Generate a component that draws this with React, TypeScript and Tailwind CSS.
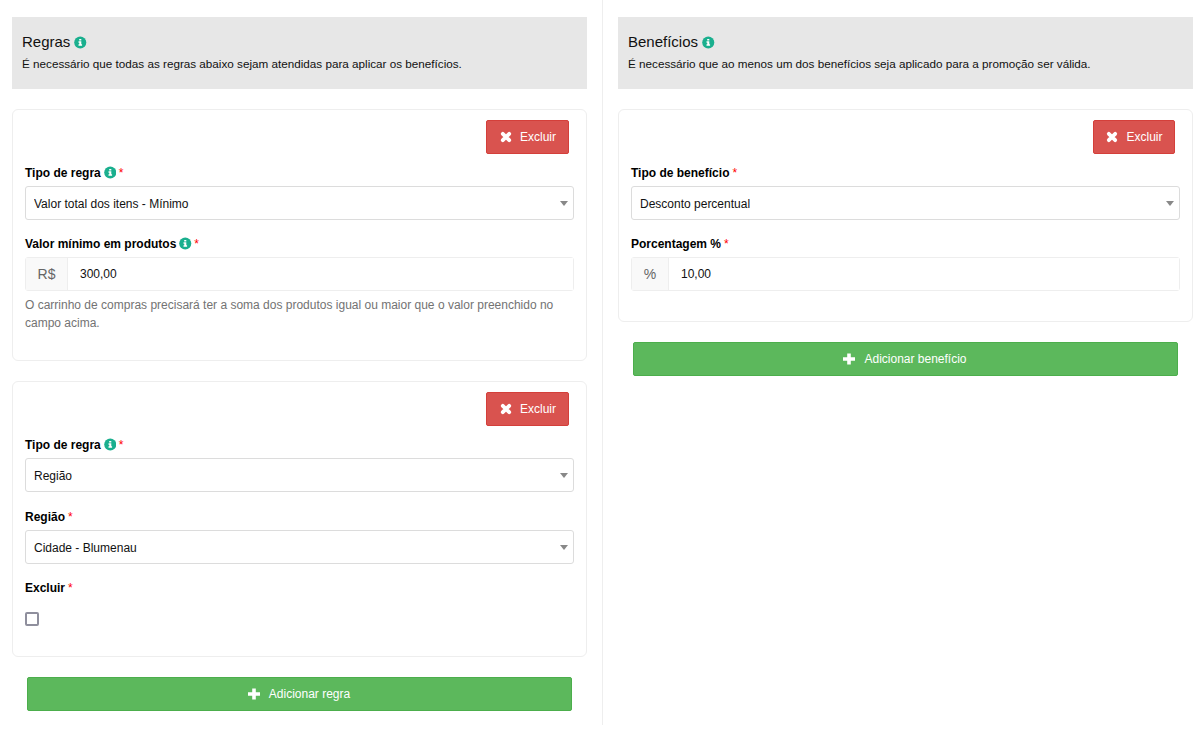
import type { ReactNode } from 'react';

const INPUT_TEXT = 'text-[12px] text-[#111]';

function Info() {
  return (
    <svg width="12.5" height="13" viewBox="0 0 13 13" className="shrink-0">
      <circle cx="6.5" cy="6.5" r="6.3" fill="#1aaf8e" />
      <path d="M5.4 2.8h2.2v1.6H5.4zM4.7 5.2h2.9v3.2h.8v1.6H4.7V8.4h.8V6.8h-.8z" fill="#fff" />
    </svg>
  );
}

function TimesIcon() {
  return (
    <svg width="12" height="12" viewBox="0 0 12 12" className="ml-[1px] mr-[8px] shrink-0">
      <path d="M2.8 2.8 9.2 9.2M9.2 2.8 2.8 9.2" stroke="#fff" strokeWidth="3.8" strokeLinecap="round" />
    </svg>
  );
}

function PlusIcon() {
  return (
    <svg width="12" height="12" viewBox="0 0 12 12" className="-ml-[1px] mr-[9px] shrink-0">
      <path d="M4.2 0.5h3.6v3.7H12v3.6H7.8v3.7H4.2V7.8H0V4.2h4.2z" fill="#fff" />
    </svg>
  );
}

function Label({
  text,
  info,
  mt = 'mt-[14px]',
}: {
  text: string;
  info?: boolean;
  mt?: string;
}) {
  return (
    <label className={`flex items-center h-[18px] pt-[2px] mb-[5px] text-[12px] font-bold text-black ${mt}`}>
      {text}
      {info && (
        <span className="ml-[3px] flex -mt-[2px]">
          <Info />
        </span>
      )}
      <span className={`text-[#ff0000] font-normal ${info ? 'ml-[2.5px]' : 'ml-[3px]'}`}>*</span>
    </label>
  );
}

function SelectBox({ value }: { value: string }) {
  return (
    <div className="relative">
      <select
        defaultValue={value}
        className={`block w-full h-[34px] appearance-none bg-white border border-[#dcdcdc] rounded-[3px] pl-2 pr-6 pt-[2px] ${INPUT_TEXT}`}
      >
        <option value={value}>{value}</option>
      </select>
      <span className="absolute right-[6px] top-[15px] w-0 h-0 border-l-[4px] border-r-[4px] border-t-[5px] border-l-transparent border-r-transparent border-t-[#888]" />
    </div>
  );
}

function AddonInput({ addon, value, addonWidth }: { addon: string; value: string; addonWidth: string }) {
  return (
    <div className="flex h-[34px] border border-[#eeeeee] rounded-[3px]">
      <span
        className={`flex items-center justify-center bg-[#f9f9f9] border-r border-[#eeeeee] text-[14px] text-[#666] ${addonWidth}`}
      >
        {addon}
      </span>
      <input
        defaultValue={value}
        className={`flex-1 min-w-0 pl-[12px] bg-white outline-none ${INPUT_TEXT}`}
      />
    </div>
  );
}

function Card({
  children,
  pb = 'pb-[30px]',
  buttonWidth = 'w-[83px]',
}: {
  children: ReactNode;
  pb?: string;
  buttonWidth?: string;
}) {
  return (
    <div className={`border border-[#eeeeee] rounded-[6px] bg-white pl-3 pr-3 pt-[10px] ${pb}`}>
      <div className="flex justify-end pr-[5px] mb-[9px]">
        <button
          className={`flex items-center justify-center h-[34px] bg-[#d9534f] border border-[#d43f3a] rounded-[2px] text-[12px] text-white ${buttonWidth}`}
        >
          <TimesIcon />
          Excluir
        </button>
      </div>
      {children}
    </div>
  );
}

function SectionHeader({ title, text }: { title: string; text: string }) {
  return (
    <div className="h-[72px] bg-[#e7e7e7] pt-[16px] px-[10px]">
      <h2 className="flex items-center h-[18px] text-[15px] font-normal text-[#111]">
        {title}
        <span className="ml-[4px] flex mt-[1px]">
          <Info />
        </span>
      </h2>
      <p className="mt-[4px] text-[11.7px] leading-[18px] text-[#111]">{text}</p>
    </div>
  );
}

function AddButton({ label }: { label: string }) {
  return (
    <button className="flex items-center justify-center w-full h-[34px] bg-[#5cb85c] border border-[#4cae4c] rounded-[2px] text-[12px] text-white">
      <PlusIcon />
      {label}
    </button>
  );
}

export default function App() {
  return (
    <div className="flex items-start w-[1202px] bg-white font-['Liberation_Sans',Arial,sans-serif]">
      {/* Regras */}
      <div className="w-[603px] h-[725px] shrink-0 border-r border-[#eeeeee] pl-3 pr-[15px] pt-[17px]">
        <SectionHeader
          title="Regras"
          text="É necessário que todas as regras abaixo sejam atendidas para aplicar os benefícios."
        />
        <div className="mt-5">
          <Card pb="pb-[28px]">
            <Label text="Tipo de regra" info mt="" />
            <SelectBox value="Valor total dos itens - Mínimo" />
            <Label text="Valor mínimo em produtos" info />
            <AddonInput addon="R$" value="300,00" addonWidth="w-[42px]" />
            <p className="mt-[5px] text-[12px] leading-[18px] text-[#737373]">
              O carrinho de compras precisará ter a soma dos produtos igual ou maior que o valor preenchido no campo acima.
            </p>
          </Card>
        </div>
        <div className="mt-5">
          <Card>
            <Label text="Tipo de regra" info mt="" />
            <SelectBox value="Região" />
            <Label text="Região" mt="mt-[15px]" />
            <SelectBox value="Cidade - Blumenau" />
            <Label text="Excluir" />
            <input
              type="checkbox"
              className="block mt-[16px] w-[14px] h-[14px] appearance-none border-2 border-[#8f8f9d] rounded-[2px] bg-white"
            />
          </Card>
        </div>
        <div className="mt-5 px-[15px]">
          <AddButton label="Adicionar regra" />
        </div>
      </div>

      {/* Benefícios */}
      <div className="w-[590px] shrink-0 pl-[15px] pt-[17px]">
        <SectionHeader
          title="Benefícios"
          text="É necessário que ao menos um dos benefícios seja aplicado para a promoção ser válida."
        />
        <div className="mt-5">
          <Card buttonWidth="w-[82px]">
            <Label text="Tipo de benefício" mt="" />
            <SelectBox value="Desconto percentual" />
            <Label text="Porcentagem %" />
            <AddonInput addon="%" value="10,00" addonWidth="w-[37px]" />
          </Card>
        </div>
        <div className="mt-5 px-[15px]">
          <AddButton label="Adicionar benefício" />
        </div>
      </div>
    </div>
  );
}
